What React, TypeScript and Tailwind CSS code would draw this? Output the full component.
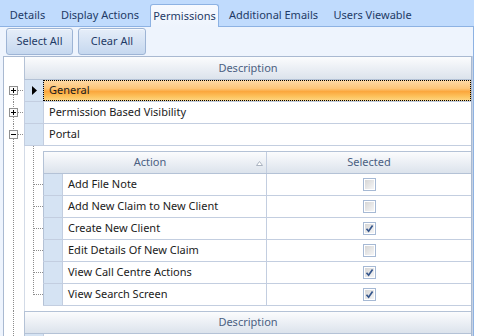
import React from "react";

const groups = [
  { label: "General", sign: "+", selected: true },
  { label: "Permission Based Visibility", sign: "+", selected: false },
  { label: "Portal", sign: "-", selected: false },
];

const actions: [string, boolean][] = [
  ["Add File Note", false],
  ["Add New Claim to New Client", false],
  ["Create New Client", true],
  ["Edit Details Of New Claim", false],
  ["View Call Centre Actions", true],
  ["View Search Screen", true],
];

const headerBg = "bg-[linear-gradient(to_bottom,#fbfcfd,#eaeef4_55%,#dce3ec)]";

function Expander({ sign, up, down }: { sign: string; up: boolean; down: boolean }) {
  return (
    <svg width="20" height="22" className="block shrink-0" shapeRendering="crispEdges">
      {up && <line x1="9.5" y1="0" x2="9.5" y2="6" stroke="#8c8c8c" strokeDasharray="1 1" />}
      {down && <line x1="9.5" y1="15" x2="9.5" y2="22" stroke="#8c8c8c" strokeDasharray="1 1" />}
      <line x1="14" y1="10.5" x2="20" y2="10.5" stroke="#8c8c8c" strokeDasharray="1 1" />
      <rect x="5.5" y="6.5" width="8" height="8" fill="#fbfbfb" stroke="#8f8f8f" />
      <line x1="7" y1="10.5" x2="12" y2="10.5" stroke="#000" />
      {sign === "+" && <line x1="9.5" y1="8" x2="9.5" y2="13" stroke="#000" />}
    </svg>
  );
}

function TreeLine() {
  return (
    <div className="w-[20px] shrink-0">
      <div className="ml-[9px] h-full border-l border-dotted border-[#8c8c8c]" />
    </div>
  );
}

function Connectors() {
  const ys = actions.map((_, i) => 28 + i * 22 + 10.5);
  return (
    <svg width="18" height="165" className="block shrink-0" shapeRendering="crispEdges">
      <line x1="8.5" y1="0" x2="8.5" y2={ys[ys.length - 1]} stroke="#8c8c8c" strokeDasharray="1 1" />
      {ys.map((y) => (
        <line key={y} x1="9" y1={y} x2="18" y2={y} stroke="#8c8c8c" strokeDasharray="1 1" />
      ))}
    </svg>
  );
}

function Check({ on }: { on: boolean }) {
  return (
    <div className="h-[13px] w-[13px] border border-[#a6b9d4] bg-white p-px">
      <div className="h-full w-full bg-linear-to-br from-[#d6d6d6] to-[#f6f6f6]">
        {on && (
          <svg width="9" height="9" className="block">
            <path d="M1.5 4.8 L3.6 7.2 L7.6 1.4" fill="none" stroke="#35568c" strokeWidth="1.7" />
          </svg>
        )}
      </div>
    </div>
  );
}

export default function App() {
  return (
    <div className="h-[336px] w-[474px] overflow-hidden bg-white font-['Noto_Sans',sans-serif] text-[11px]">
      {/* tab strip */}
      <div className="flex h-[27px] items-end border-b border-[#8db2e3] bg-[#c0dbfd] pl-[3px] text-[#1e3a66]">
        <div className="flex h-[23px] w-[49px] items-center justify-center pt-[2px]">Details</div>
        <div className="flex h-[23px] w-[96px] items-center justify-center pt-[2px]">Display Actions</div>
        <div className="-mb-px ml-[2px] flex h-[23px] w-[69px] items-center justify-center rounded-t-[3px] border-x border-t border-[#8db2e3] bg-linear-to-b from-[#f7faff] to-[#eef4fd] pt-[1px]">
          Permissions
        </div>
        <div className="ml-[2px] flex h-[23px] w-[105px] items-center justify-center pt-[2px]">Additional Emails</div>
        <div className="flex h-[23px] w-[93px] items-center justify-center pt-[2px]">Users Viewable</div>
      </div>

      <div className="border-r border-[#8db2e3] bg-[#eef4fd]">
        {/* toolbar */}
        <div className="flex h-[29px] items-start gap-[5px] pl-[6px] pt-px">
          <button className="h-[27px] w-[67px] rounded-[3px] border border-[#9db4d5] bg-linear-to-b from-[#e6eef9] to-[#c6d8ef] text-[#1e3a66] shadow-[inset_0_1px_0_#f6f9fd]">
            Select All
          </button>
          <button className="h-[27px] w-[68px] rounded-[3px] border border-[#9db4d5] bg-linear-to-b from-[#e6eef9] to-[#c6d8ef] text-[#1e3a66] shadow-[inset_0_1px_0_#f6f9fd]">
            Clear All
          </button>
        </div>

        {/* grid */}
        <div className="flex">
          <div className="ml-[3px] w-[469px] border-x border-t border-[#a9b9d1] bg-white text-[#1b1b1b]">
            <div className="flex h-[23px]">
              <div className="w-[20px] shrink-0" />
              <div className={`flex flex-1 items-center justify-center border-b border-l border-[#b4c2d6] ${headerBg} text-[#4b5f82]`}>
                Description
              </div>
            </div>

            {groups.map((g, i) => (
              <div key={g.label} className="flex h-[22px]">
                <Expander sign={g.sign} up={i > 0} down />
                <div className="flex flex-1 border-b border-l border-[#c3cee0]">
                  <div className="flex w-[18px] shrink-0 items-center justify-center bg-[#d5e3f3]">
                    {g.selected && (
                      <svg width="5" height="9" className="block">
                        <path d="M0 0 L5 4.5 L0 9 Z" fill="#000" />
                      </svg>
                    )}
                  </div>
                  <div
                    className={`flex flex-1 items-center border-l border-[#c3cee0] pl-[5px] ${
                      g.selected
                        ? "bg-[linear-gradient(to_bottom,#fedba8_0%,#fdc67a_40%,#fba73d_55%,#fdc45f_80%,#fed98b_100%)] outline-1 -outline-offset-1 outline-black outline-dotted"
                        : ""
                    }`}
                  >
                    {g.label}
                  </div>
                </div>
              </div>
            ))}

            {/* expanded Portal detail */}
            <div className="flex">
              <TreeLine />
              <div className="flex flex-1 border-l border-[#d3dbe7]">
                <Connectors />
                <div className="flex-1 pt-[5px] pb-[5px]">
                  <div className="flex h-[23px] border-y border-[#b4c2d6] text-[#4b5f82]">
                    <div className={`flex flex-1 items-center justify-center border-l border-[#b4c2d6] pr-[10px] ${headerBg} relative`}>
                      Action
                      <svg width="7" height="5" className="absolute top-[9px] right-[3px]">
                        <path d="M3.5 0.5 L6.5 4.5 L0.5 4.5 Z" fill="#fff" stroke="#aab3c0" />
                      </svg>
                    </div>
                    <div className={`flex w-[205px] items-center justify-center border-l border-[#c3cee0] ${headerBg}`}>
                      Selected
                    </div>
                  </div>
                  {actions.map(([name, on]) => (
                    <div key={name} className="flex h-[22px] border-b border-[#c3cee0]">
                      <div className="w-[19px] shrink-0 border-l border-[#b4c2d6] bg-[#d5e3f3]" />
                      <div className="flex flex-1 items-center border-l border-[#c3cee0] pl-[5px]">{name}</div>
                      <div className="flex w-[205px] items-center justify-center border-l border-[#c3cee0]">
                        <Check on={on} />
                      </div>
                    </div>
                  ))}
                </div>
              </div>
            </div>

            {/* next nested band */}
            <div className="flex">
              <TreeLine />
              <div className="flex-1">
                <div className={`flex h-[23px] items-center justify-center border-y border-l border-[#b4c2d6] ${headerBg} text-[#4b5f82]`}>
                  Description
                </div>
                <div className="flex h-[22px] border-l border-[#b4c2d6]">
                  <div className="w-[18px] bg-[#d5e3f3]" />
                  <div className="flex-1 border-l border-[#c3cee0]" />
                </div>
              </div>
            </div>
          </div>
          <div className="w-[1px] bg-[#c6d2e3]" />
        </div>
      </div>
    </div>
  );
}
